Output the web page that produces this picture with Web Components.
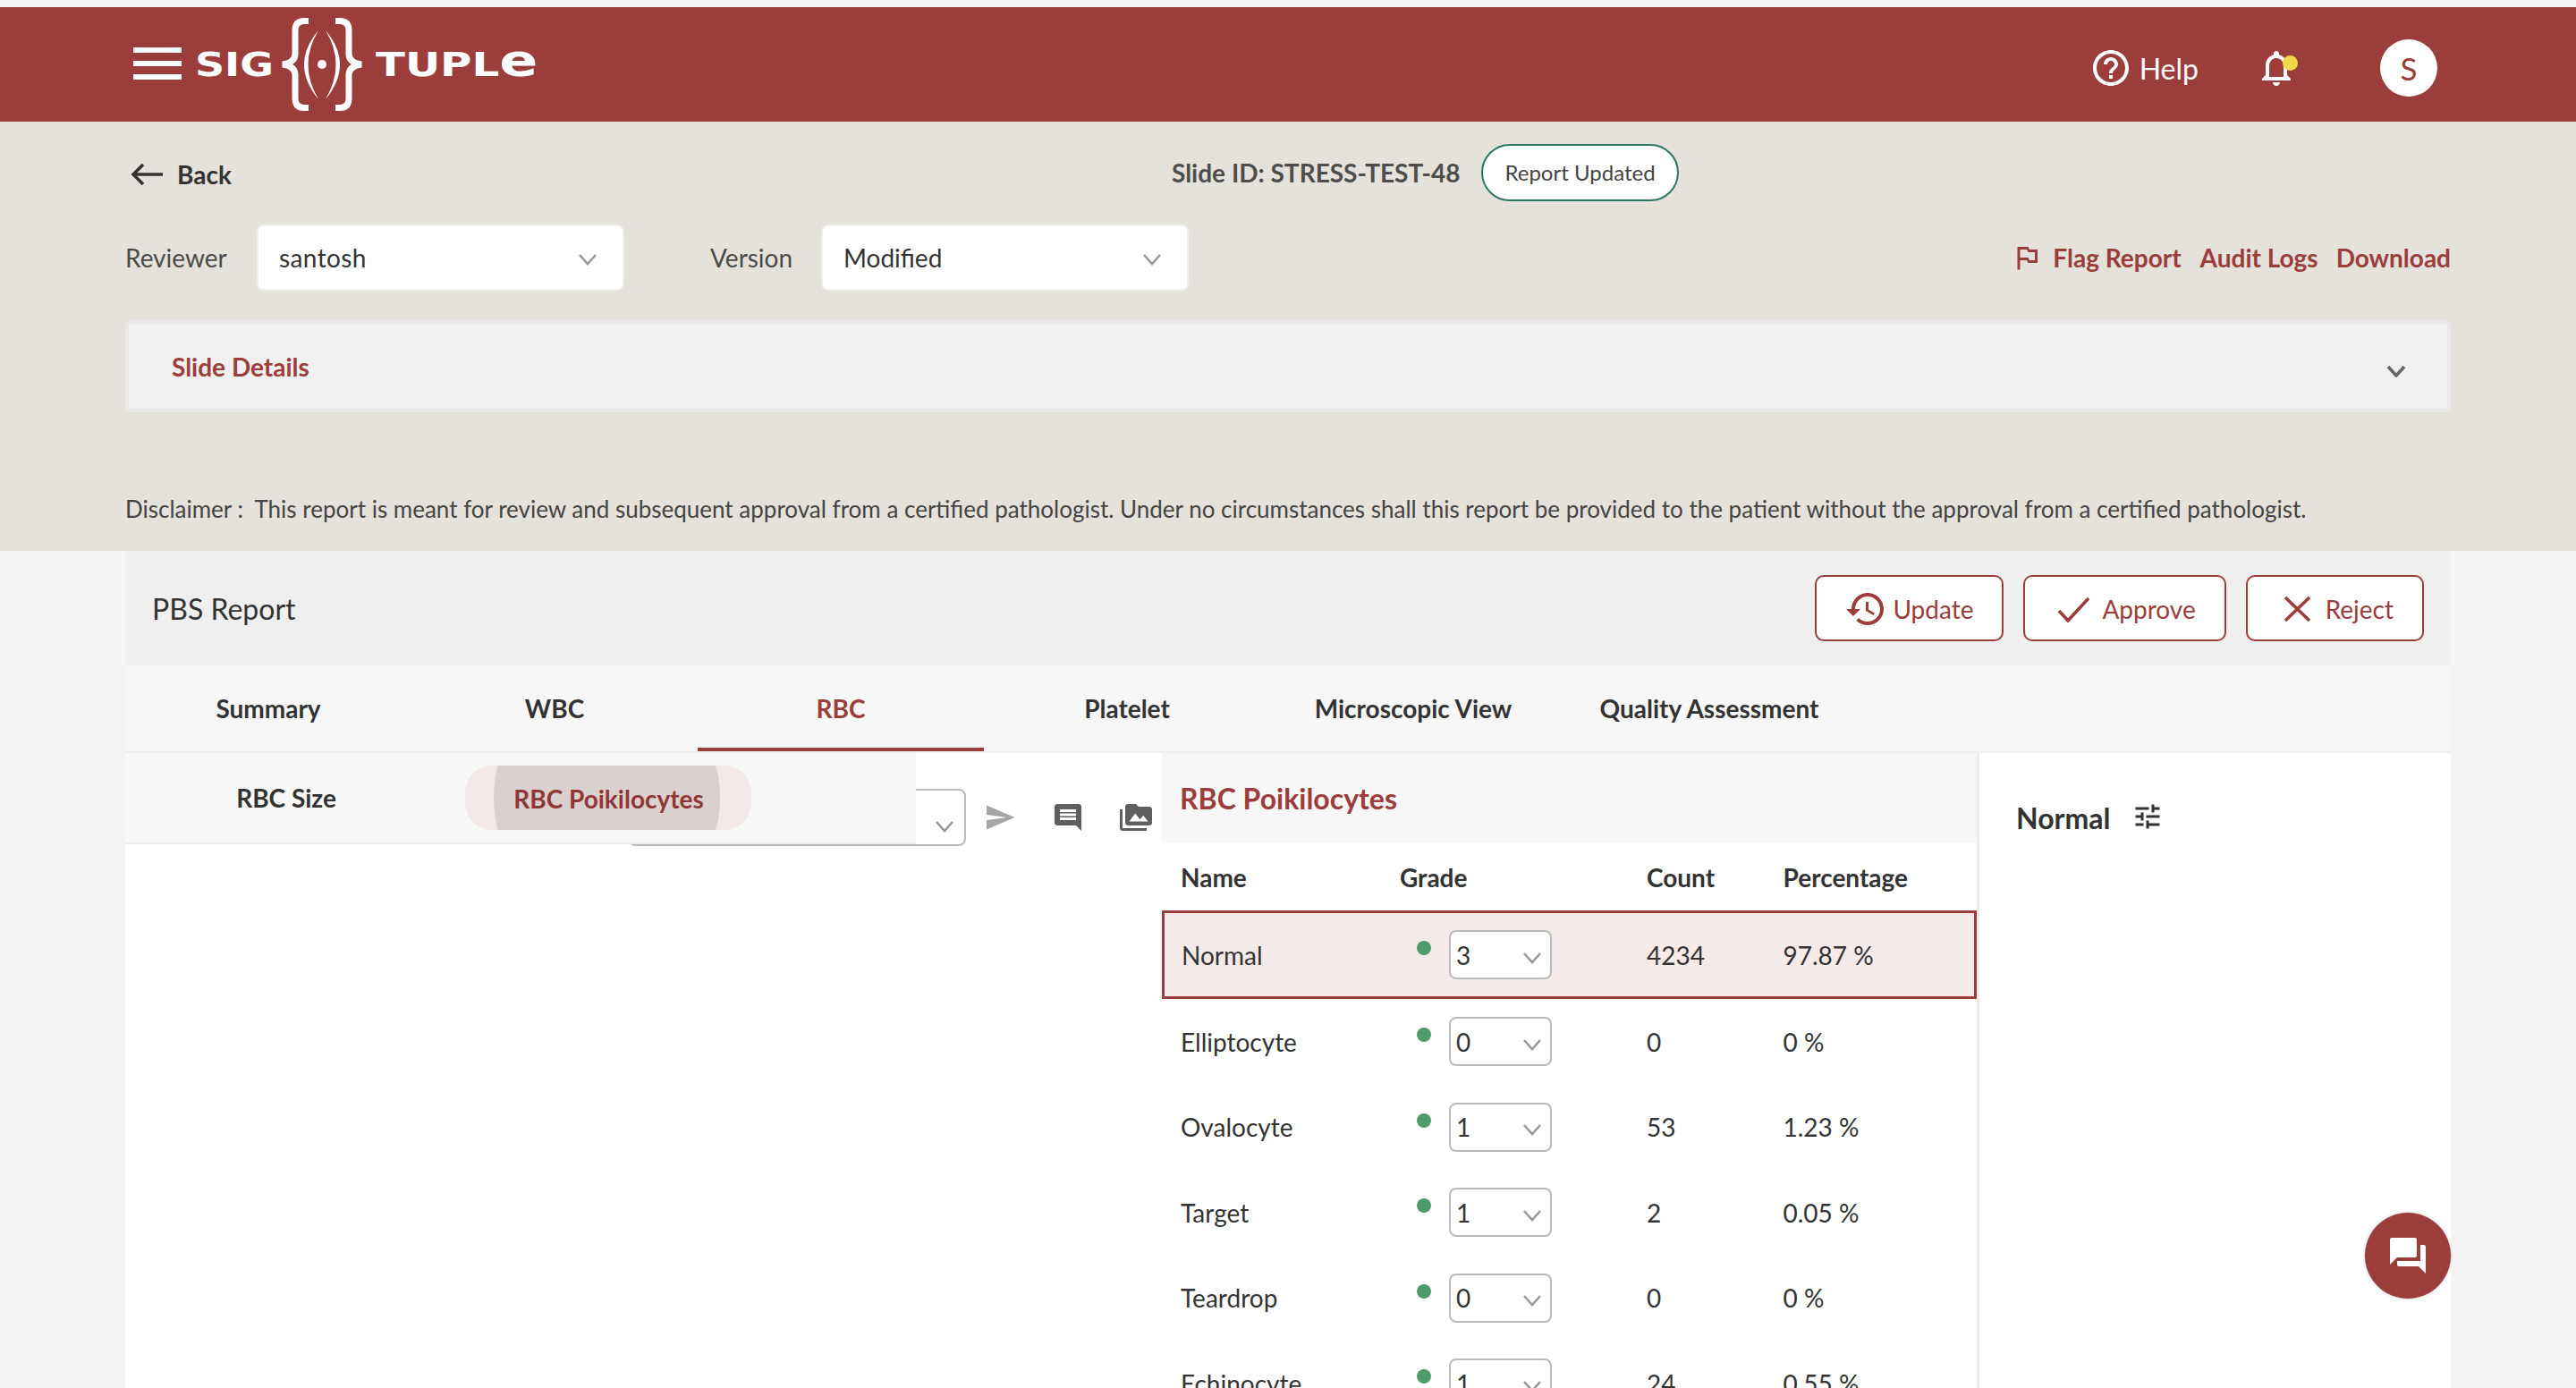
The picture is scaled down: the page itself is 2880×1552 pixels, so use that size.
<!DOCTYPE html>
<html>
<head>
<meta charset="utf-8">
<title>PBS Report</title>
<style>
  html, body { margin: 0; height: 1552px; overflow: hidden; background: #f4f4f4; }
  body { font-family: Lato, "Open Sans", sans-serif; font-size: 28px; color: #333; padding-top: 8px; box-sizing: border-box; display: flex; flex-direction: column; }
  pbs-report { flex: 1; min-height: 0; }
</style>
</head>
<body>
<app-header></app-header>
<report-toolbar></report-toolbar>
<pbs-report></pbs-report>
<chat-fab></chat-fab>

<script>
const RED = "#9b3d3b";
const RESET = `h1, h2, div, span, label, i, svg { margin: 0; padding: 0; box-sizing: border-box; }`;
const CHEVRON = `<svg width="22" height="14" viewBox="0 0 22 14"><path d="M2 2l9 10 9-10" fill="none" stroke="currentColor" stroke-width="2.6"/></svg>`;

const ICONS = {
  help: "M11 18h2v-2h-2v2zm1-16C6.48 2 2 6.48 2 12s4.48 10 10 10 10-4.48 10-10S17.52 2 12 2zm0 18c-4.41 0-8-3.59-8-8s3.59-8 8-8 8 3.59 8 8-3.59 8-8 8zm0-14c-2.21 0-4 1.79-4 4h2c0-1.1.9-2 2-2s2 .9 2 2c0 2-3 1.75-3 5h2c0-2.25 3-2.5 3-5 0-2.21-1.79-4-4-4z",
  bell: "M12 22c1.1 0 2-.9 2-2h-4c0 1.1.89 2 2 2zm6-6v-5c0-3.07-1.64-5.64-4.5-6.32V4c0-.83-.67-1.5-1.5-1.5s-1.5.67-1.5 1.5v.68C7.63 5.36 6 7.92 6 11v5l-2 2v1h16v-1l-2-2zm-2 1H8v-6c0-2.48 1.51-4.5 4-4.5s4 2.02 4 4.5v6z",
  flag: "M14 6l-1-2H5v17h2v-7h5l1 2h7V6h-6zm4 8h-4l-1-2H7V6h5l1 2h5v6z",
  history: "M13 3c-4.97 0-9 4.03-9 9H1l3.89 3.89.07.14L9 12H6c0-3.87 3.13-7 7-7s7 3.13 7 7-3.13 7-7 7c-1.93 0-3.68-.79-4.94-2.06l-1.42 1.42C8.27 19.99 10.51 21 13 21c4.97 0 9-4.03 9-9s-4.03-9-9-9zm-1 5v5l4.28 2.54.72-1.21-3.5-2.08V8H12z",
  send: "M2.01 21L23 12 2.01 3 2 10l15 2-15 2z",
  comment: "M21.99 4c0-1.1-.89-2-1.99-2H4c-1.1 0-2 .9-2 2v12c0 1.1.9 2 2 2h14l4 4-.01-18zM18 14H6v-2h12v2zm0-3H6V9h12v2zm0-3H6V6h12v2z",
  media: "M2 6H0v5h.01L0 20c0 1.1.9 2 2 2h18v-2H2V6zm20-2h-8l-2-2H6c-1.1 0-1.99.9-1.99 2L4 16c0 1.1.9 2 2 2h16c1.1 0 2-.9 2-2V6c0-1.1-.9-2-2-2zM7 15l4.5-6 3.5 4.51 2.5-3.01L21 15H7z",
  tune: "M3 17v2h6v-2H3zM3 5v2h10V5H3zm10 16v-2h8v-2h-8v-2h-2v6h2zM7 9v2H3v2h4v2h2V9H7zm14 4v-2H11v2h10zm-6-4h2V7h4V5h-4V3h-2v6z",
  forum: "M21 6h-2v9H6v2c0 .55.45 1 1 1h11l4 4V7c0-.55-.45-1-1-1zm-4 6V3c0-.55-.45-1-1-1H3c-.55 0-1 .45-1 1v14l4-4h10c.55 0 1-.45 1-1z",
};
const icon = (name, size, color) =>
  `<svg width="${size}" height="${size}" viewBox="0 0 24 24" fill="${color}" style="display:block;flex:none"><path d="${ICONS[name]}"/></svg>`;

class AppHeader extends HTMLElement {
  constructor() {
    super();
    this.shadowDOM = this.attachShadow({ mode: "open" });
    this.shadowDOM.innerHTML = `
      <style>
        ${RESET}
        :host { display: block; height: 128px; background: ${RED}; color: #fff; }
        .bar { height: 100%; display: flex; align-items: center; padding: 0 155px 0 149px; }
        .burger { width: 54px; height: 36px; display: flex; flex-direction: column; justify-content: space-between; margin: -2px 15px 0 0; }
        .burger i { display: block; height: 6px; background: #fff; }
        .word { display: block; height: 46px; font: bold 38px/46px "DejaVu Sans", sans-serif; white-space: nowrap; }
        .word span { display: inline-block; transform-origin: 0 50%; }
        .sig { width: 85px; margin-right: 9px; }
        .sig span { transform: scaleX(1.21); }
        .tuple { width: 178px; margin-left: 12px; }
        .tuple span { transform: scaleX(1.27); }
        .tuple b { font-size: 50px; line-height: 30px; }
        .braces { display: block; flex: none; }
        .right { margin-left: auto; display: flex; align-items: center; padding-top: 8px; }
        .help { display: flex; align-items: center; font-size: 32px; gap: 8px; }
        .bell { position: relative; margin-left: 63px; }
        .bell i { position: absolute; left: 31px; top: 10px; width: 17px; height: 17px; border-radius: 50%; background: #f2d84b; }
        .avatar { width: 64px; height: 64px; border-radius: 50%; background: #fff; color: ${RED}; font-size: 35px; display: flex; align-items: center; justify-content: center; margin-left: 92px; }
      </style>
      <div class="bar">
        <div class="burger"><i></i><i></i><i></i></div>
        <div class="word sig"><span>SIG</span></div>
        <svg class="braces" width="96" height="104" viewBox="0 0 96 104" fill="#fff">
          <path d="M33 3.500H28Q18 3.500 18 14V40Q18 50 4 52Q18 54 18 64V90Q18 100.500 28 100.500H33" fill="none" stroke="#fff" stroke-width="7"/>
          <path d="M63 3.500H68Q78 3.500 78 14V40Q78 50 92 52Q78 54 78 64V90Q78 100.500 68 100.500H63" fill="none" stroke="#fff" stroke-width="7"/>
          <path d="M44 14Q12 52 44 91Q21 52 44 14Z"/>
          <path d="M52 14Q84 52 52 91Q75 52 52 14Z"/>
          <circle cx="48" cy="52" r="5"/>
        </svg>
        <div class="word tuple"><span>TUPL<b>e</b></span></div>
        <div class="right">
          <div class="help">${icon("help", 48, "#fff")}<span>Help</span></div>
          <div class="bell">${icon("bell", 48, "#fff")}<i></i></div>
          <div class="avatar">S</div>
        </div>
      </div>
    `;
  }
}

class StSelect extends HTMLElement {
  constructor() {
    super();
    this.shadowDOM = this.attachShadow({ mode: "open" });
  }

  connectedCallback() {
    this.shadowDOM.innerHTML = `
      <style>
        ${RESET}
        :host { display: block; box-sizing: border-box; width: 411px; height: 74px; flex: none; background: #fff; border: 2px solid #eeeeee; border-radius: 7px; color: #333; }
        .box { height: 100%; display: flex; align-items: center; justify-content: space-between; padding: 0 28px 0 23px; }
        svg { display: block; color: #999; margin-top: 4px; }
      </style>
      <div class="box"><span>${this.getAttribute("value") || ""}</span>${CHEVRON}</div>
    `;
  }
}

class ReportToolbar extends HTMLElement {
  constructor() {
    super();
    this.shadowDOM = this.attachShadow({ mode: "open" });
    this.shadowDOM.innerHTML = `
      <style>
        ${RESET}
        :host { display: block; box-sizing: border-box; height: 480px; background: #e4e2da; padding: 25px 140px 0; }
        .top { display: flex; align-items: center; height: 64px; }
        .back { width: 1170px; display: flex; align-items: center; gap: 14px; padding: 4px 0 0 6px; font-weight: 700; color: #333; }
        .back svg { display: block; }
        .slide { font-weight: 700; color: #4d4d4d; margin-right: 24px; }
        .pill { height: 64px; padding: 0 24px 2px; display: flex; align-items: center; background: #fff; border: 2px solid #2d7566; border-radius: 32px; font-size: 24px; color: #444; }
        .filters { display: flex; align-items: center; margin-top: 26px; color: #4a4a4a; }
        .filters label { width: 147px; }
        .filters label.second { width: 124px; margin-left: 96px; }
        .links { margin-left: auto; display: flex; align-items: center; font-weight: 700; color: ${RED}; }
        .links span { margin-left: 21px; }
        .links span:last-child { margin-left: 20px; }
        .links svg { margin-right: -10px; }
        .details { margin-top: 33px; height: 103px; background: #f0f0f0; border: 4px solid #e8e8e8; border-radius: 6px; display: flex; align-items: center; justify-content: space-between; padding: 0 46px 0 48px; color: ${RED}; font-weight: 700; }
        .details svg { color: #666; margin-top: 10px; }
        .details path { stroke-width: 3.6; }
        .disclaimer { margin-top: 91px; font-size: 26px; line-height: 34px; color: #444; white-space: pre; }
      </style>
      <div class="top">
        <div class="back">
          <svg width="38" height="26" viewBox="0 0 38 26"><path d="M36 13H3M14 2L3 13l11 11" fill="none" stroke="#333" stroke-width="3.6"/></svg>
          <span>Back</span>
        </div>
        <div class="slide">Slide ID: STRESS-TEST-48</div>
        <div class="pill">Report Updated</div>
      </div>
      <div class="filters">
        <label>Reviewer</label>
        <st-select value="santosh" style="letter-spacing:.4px"></st-select>
        <label class="second">Version</label>
        <st-select value="Modified"></st-select>
        <div class="links">
          ${icon("flag", 36, RED)}
          <span>Flag Report</span><span>Audit Logs</span><span>Download</span>
        </div>
      </div>
      <div class="details"><span>Slide Details</span>${CHEVRON}</div>
      <div class="disclaimer">Disclaimer :  This report is meant for review and subsequent approval from a certified pathologist. Under no circumstances shall this report be provided to the patient without the approval from a certified pathologist.</div>
    `;
  }
}

class ReportButton extends HTMLElement {
  constructor() {
    super();
    this.shadowDOM = this.attachShadow({ mode: "open" });
    this.shadowDOM.innerHTML = `
      <style>
        ${RESET}
        :host { display: flex; box-sizing: border-box; align-items: center; height: 74px; background: #fff; border: 2.5px solid ${RED}; border-radius: 10px; color: ${RED}; padding-left: var(--pl, 30px); padding-right: 32px; padding-top: 2px; gap: var(--gap, 12px); }
        ::slotted(svg) { display: block; flex: none; }
      </style>
      <slot name="icon"></slot><slot></slot>
    `;
  }
}

class RbcRow extends HTMLElement {
  constructor() {
    super();
    this.shadowDOM = this.attachShadow({ mode: "open" });
  }

  connectedCallback() {
    this.shadowDOM.innerHTML = `
      <style>
        ${RESET}
        :host { display: grid; box-sizing: border-box; grid-template-columns: 245px 276px 152.500px 1fr; align-items: center; height: 95.500px; padding-left: 21px; color: #333; }
        :host([active]) { height: 99px; padding-left: 19px; grid-template-columns: 244px 276px 152.500px 1fr; background: #f5eaea; border: 3px solid ${RED}; }
        .grade { display: flex; align-items: flex-start; padding-left: 19px; gap: 20px; }
        .dot { width: 16px; height: 16px; border-radius: 50%; background: #4f9a6b; margin-top: 12px; }
        .pick { width: 115px; height: 55px; background: #fff; border: 2.5px solid #bbb; border-radius: 8px; display: flex; align-items: center; justify-content: space-between; padding: 0 9px 0 6px; }
        .pick svg { display: block; color: #999; margin-top: 6px; }
      </style>
      <div>${this.getAttribute("name")}</div>
      <div class="grade"><i class="dot"></i><div class="pick"><span>${this.getAttribute("grade")}</span>${CHEVRON}</div></div>
      <div>${this.getAttribute("count")}</div>
      <div>${this.getAttribute("pct")}</div>
    `;
  }
}

class PbsReport extends HTMLElement {
  constructor() {
    super();
    this.shadowDOM = this.attachShadow({ mode: "open" });
    this.shadowDOM.innerHTML = `
      <style>
        ${RESET}
        :host { display: flex; flex-direction: column; margin: 0 140px; background: #fff; overflow: hidden; }
        .head { flex: none; height: 128px; background: #efefef; display: flex; align-items: center; justify-content: space-between; padding: 0 30px; }
        .head h1 { font-size: 32px; font-weight: 400; color: #333; }
        .actions { display: flex; gap: 22px; }
        .tabs { flex: none; height: 98px; background: #f7f7f7; border-bottom: 2px solid #efefef; display: flex; font-weight: 700; color: #333; }
        .tabs div { width: 320px; height: 96px; display: flex; align-items: center; justify-content: center; }
        .tabs div:last-child { width: 342px; }
        .tabs .on { color: ${RED}; border-bottom: 4px solid ${RED}; padding-top: 4px; }
        .body { flex: 1; min-height: 0; display: grid; grid-template-columns: 1159px 911px 1fr; }
        .left { display: grid; align-content: start; }
        .left > * { grid-area: 1 / 1; }
        .tools { margin-top: 40px; display: flex; align-items: center; justify-content: flex-end; padding-right: 11px; }
        .fake { width: 378px; height: 64px; flex: none; border: 2.5px solid #bbb; border-radius: 8px; display: flex; justify-content: flex-end; align-items: center; padding-right: 11px; margin-right: 20px; color: #999; }
        .fake svg { display: block; margin-top: 20px; }
        .tools .gap { margin-left: 40px; }
        .subtabs { width: 884px; height: 102px; background: #f8f8f8; border-bottom: 2px solid #efefef; display: flex; align-items: center; font-weight: 700; color: #333; }
        .subtabs .size { width: 360px; text-align: center; }
        .ripple { position: relative; width: 320px; height: 72px; margin-left: 20px; border-radius: 30px; background: #f4e9e9; overflow: hidden; display: flex; align-items: center; justify-content: center; color: #8f3735; }
        .ripple::before { content: ""; position: absolute; left: 32px; width: 253px; top: -20px; bottom: -20px; background: #dbd0d0; border-radius: 20px / 50%; }
        .ripple span { position: relative; padding: 2px 0 0 1px; }
        .mid { overflow: hidden; }
        .mid h2 { height: 101px; padding-left: 20px; background: #f7f7f7; font-size: 32px; font-weight: 700; line-height: 101px; color: ${RED}; }
        .thead { height: 75px; display: grid; grid-template-columns: 245px 276px 152.500px 1fr; align-items: center; padding-left: 21px; font-weight: 700; color: #333; }
        .right { border-left: 3px solid #ececec; padding: 52px 0 0 41px; }
        .right div { display: flex; align-items: center; height: 40px; gap: 24px; font-size: 32px; font-weight: 700; color: #333; }
        .right svg { margin-top: -2px; }
      </style>
      <div class="head">
        <h1>PBS Report</h1>
        <div class="actions">
          <report-button style="--pl:31px;--gap:6px">${icon("history", 48, RED).replace("<svg", '<svg slot="icon"')}Update</report-button>
          <report-button style="--pl:36px;--gap:13px"><svg slot="icon" width="37" height="30" viewBox="0 0 37 30"><path d="M2 17l10 11L35 3" fill="none" stroke="${RED}" stroke-width="3.6"/></svg>Approve</report-button>
          <report-button style="--pl:40px;--gap:16px"><svg slot="icon" width="31" height="30" viewBox="0 0 31 30"><path d="M2 2l27 26M29 2L2 28" fill="none" stroke="${RED}" stroke-width="3.6"/></svg>Reject</report-button>
        </div>
      </div>
      <div class="tabs">
        <div>Summary</div><div>WBC</div><div class="on">RBC</div><div>Platelet</div><div>Microscopic View</div><div>Quality Assessment</div>
      </div>
      <div class="body">
        <div class="left">
          <div class="tools">
            <div class="fake">${CHEVRON}</div>
            ${icon("send", 36, "#a5a5a5")}
            <span class="gap">${icon("comment", 36, "#5f5f5f")}</span>
            <span class="gap">${icon("media", 36, "#5f5f5f")}</span>
          </div>
          <div class="subtabs">
            <div class="size">RBC Size</div>
            <div class="ripple"><span>RBC Poikilocytes</span></div>
          </div>
        </div>
        <div class="mid">
          <h2>RBC Poikilocytes</h2>
          <div class="thead"><div>Name</div><div>Grade</div><div>Count</div><div>Percentage</div></div>
          <rbc-row active name="Normal" grade="3" count="4234" pct="97.87 %"></rbc-row>
          <rbc-row name="Elliptocyte" grade="0" count="0" pct="0 %"></rbc-row>
          <rbc-row name="Ovalocyte" grade="1" count="53" pct="1.23 %"></rbc-row>
          <rbc-row name="Target" grade="1" count="2" pct="0.05 %"></rbc-row>
          <rbc-row name="Teardrop" grade="0" count="0" pct="0 %"></rbc-row>
          <rbc-row name="Echinocyte" grade="1" count="24" pct="0.55 %"></rbc-row>
        </div>
        <div class="right"><div>Normal ${icon("tune", 36, "#333")}</div></div>
      </div>
    `;
  }
}

class ChatFab extends HTMLElement {
  constructor() {
    super();
    this.shadowDOM = this.attachShadow({ mode: "open" });
    this.shadowDOM.innerHTML = `
      <style>
        :host { position: fixed; right: 140px; bottom: 100px; width: 96px; height: 96px; border-radius: 50%; background: ${RED}; box-shadow: 0 0 3px rgba(0,0,0,.3); display: flex; align-items: center; justify-content: center; }
      </style>
      ${icon("forum", 48, "#fff")}
    `;
  }
}

customElements.define("app-header", AppHeader);
customElements.define("st-select", StSelect);
customElements.define("report-toolbar", ReportToolbar);
customElements.define("report-button", ReportButton);
customElements.define("rbc-row", RbcRow);
customElements.define("pbs-report", PbsReport);
customElements.define("chat-fab", ChatFab);
</script>
</body>
</html>
